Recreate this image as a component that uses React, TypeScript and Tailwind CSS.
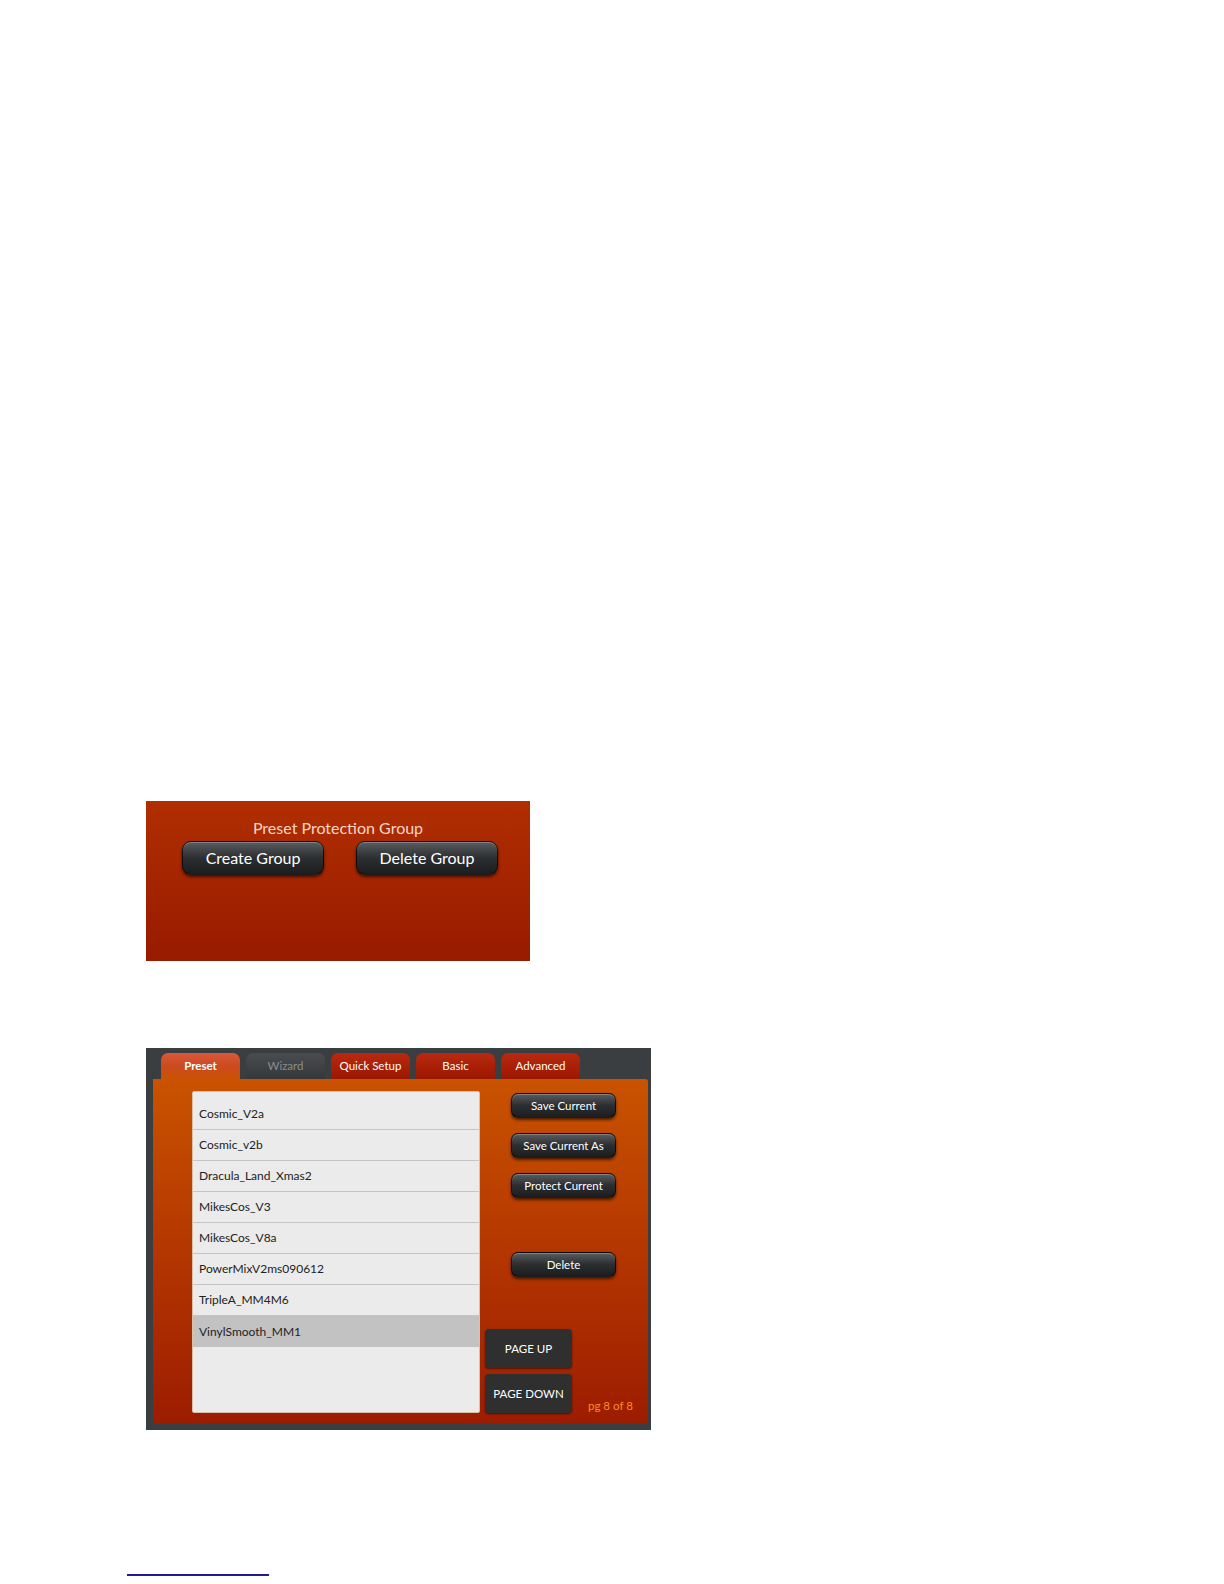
import React from 'react';

const presets = [
  'Cosmic_V2a',
  'Cosmic_v2b',
  'Dracula_Land_Xmas2',
  'MikesCos_V3',
  'MikesCos_V8a',
  'PowerMixV2ms090612',
  'TripleA_MM4M6',
  'VinylSmooth_MM1',
];

const font = { fontFamily: 'Lato, "Open Sans", sans-serif' };

const GlossButton: React.FC<{ label: string; big?: boolean }> = ({ label, big }) => (
  <div
    className={`flex items-center justify-center text-white border border-black/70 bg-gradient-to-b from-[#5a5d60] via-[#2c2e30] to-[#1c1d1e] shadow-[0_2px_3px_rgba(0,0,0,0.6),inset_0_1px_0_rgba(255,255,255,0.25)] ${
      big ? 'w-[142px] h-[34px] rounded-[9px] text-[16px]' : 'w-[105px] h-[25px] rounded-[7px] text-[11.5px]'
    }`}
  >
    {label}
  </div>
);

const tabs = [
  { label: 'Preset', cls: 'bg-gradient-to-b from-[#d9583a] via-[#cc4a1c] to-[#c95300] text-white font-bold' },
  { label: 'Wizard', cls: 'bg-gradient-to-b from-[#4a4d50] to-[#35383a] text-[#8a8c8e]' },
  { label: 'Quick Setup', cls: 'bg-gradient-to-b from-[#b82a10] to-[#9c1600] text-white' },
  { label: 'Basic', cls: 'bg-gradient-to-b from-[#b82a10] to-[#9c1600] text-white' },
  { label: 'Advanced', cls: 'bg-gradient-to-b from-[#b82a10] to-[#9c1600] text-white' },
];

const PageButton: React.FC<{ label: string }> = ({ label }) => (
  <div className="w-[87px] h-[39px] rounded-[4px] bg-[#2f2f30] shadow-[0_1px_2px_rgba(0,0,0,0.5)] flex items-center justify-center text-[11.5px] text-white">
    {label}
  </div>
);

export default function App() {
  return (
    <div className="w-[1224px] h-[1584px] bg-white flex flex-col" style={font}>
      {/* Preset protection group */}
      <div className="ml-[146px] mt-[801px] w-[384px] h-[160px] bg-gradient-to-b from-[#b02e00] to-[#981a00] flex flex-col items-center pt-[17px]">
        <div className="text-[16px] leading-[20px] text-[#f6d6c8]">Preset Protection Group</div>
        <div className="flex gap-[32px] mt-[3px] ml-[4px]">
          <GlossButton label="Create Group" big />
          <GlossButton label="Delete Group" big />
        </div>
      </div>

      {/* Preset tab panel */}
      <div className="ml-[146px] mt-[87px] w-[505px] h-[382px] bg-[#3b3e40] flex flex-col pt-[5px] pl-[7px] pr-[3px] pb-[7px]">
        <div className="flex gap-[6px] pl-[8px] h-[26px]">
          {tabs.map((t) => (
            <div
              key={t.label}
              className={`w-[79px] h-[26px] rounded-t-[7px] flex items-center justify-center text-[11.5px] ${t.cls}`}
            >
              {t.label}
            </div>
          ))}
        </div>
        <div className="flex-1 rounded-tr-[3px] bg-gradient-to-b from-[#c95300] via-[#b43600] to-[#9c1c00] flex pt-[12px] pl-[39px] pb-[10px]">
          <div className="w-[288px] bg-[#ebebeb] border border-[#d8c0a8] rounded-[2px] pt-[7px] flex flex-col">
            {presets.map((p, i) => (
              <div
                key={p}
                className={`h-[31px] flex items-center pl-[6px] text-[12px] text-[#222] ${
                  i === presets.length - 1 ? 'bg-[#c2c2c2]' : 'border-b border-[#c4c4c4]'
                }`}
              >
                {p}
              </div>
            ))}
          </div>
          <div className="flex flex-col ml-[5px] flex-1">
            <div className="flex flex-col gap-[15px] ml-[26px] mt-[2px]">
              <GlossButton label="Save Current" />
              <GlossButton label="Save Current As" />
              <GlossButton label="Protect Current" />
            </div>
            <div className="ml-[26px] mt-[54px]">
              <GlossButton label="Delete" />
            </div>
            <div className="flex items-end mt-auto">
              <div className="flex flex-col gap-[6px]">
                <PageButton label="PAGE UP" />
                <PageButton label="PAGE DOWN" />
              </div>
              <div className="ml-[16px] mb-[-1px] text-[11.5px] text-[#ff8a1c]">pg 8 of 8</div>
            </div>
          </div>
        </div>
      </div>

      {/* footnote rule */}
      <div className="ml-[127px] mt-[144px] w-[142px] h-[2px] bg-[#1c1c96]" />
    </div>
  );
}
